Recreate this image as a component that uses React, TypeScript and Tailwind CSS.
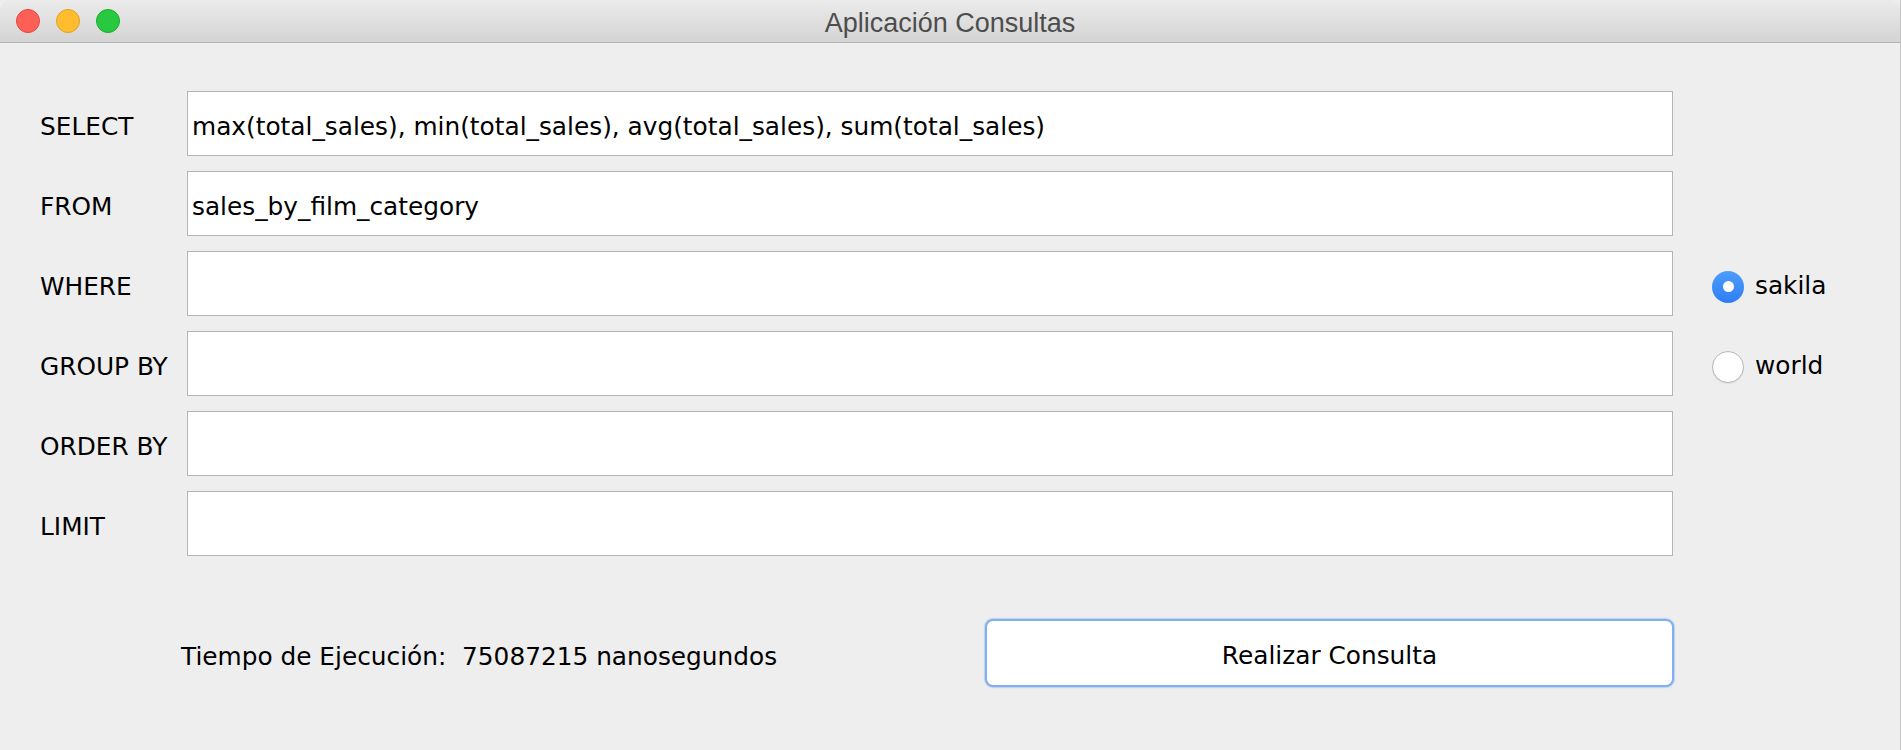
import React from "react";

const FIELDS = [
  { label: "SELECT", value: "max(total_sales), min(total_sales), avg(total_sales), sum(total_sales)" },
  { label: "FROM", value: "sales_by_film_category" },
  { label: "WHERE", value: "", radio: { name: "sakila", checked: true } },
  { label: "GROUP BY", value: "", radio: { name: "world", checked: false } },
  { label: "ORDER BY", value: "" },
  { label: "LIMIT", value: "" },
];

const Radio = ({ name, checked }: { name: string; checked: boolean }) => {
  return (
    <div className="flex items-center">
      {checked ? (
        <div className="w-[32px] h-[32px] rounded-full bg-gradient-to-b from-[#4d9dfb] to-[#2f7df6] flex items-center justify-center">
          <div className="w-[11px] h-[11px] rounded-full bg-white" />
        </div>
      ) : (
        <div className="w-[32px] h-[32px] rounded-full bg-white border border-[#b8b8b8] shadow-[0_1px_1px_rgba(0,0,0,0.08)]" />
      )}
      <span className="ml-[11px] text-[24.8px] leading-none text-black">{name}</span>
    </div>
  );
};

export default function App() {
  return (
    <div className="w-[1901px] h-[750px] bg-[#eeeeee] flex flex-col overflow-hidden border-r border-[#c4c4c4] font-['DejaVu_Sans',sans-serif]">
      {/* title bar */}
      <div className="h-[43px] shrink-0 rounded-t-[10px] bg-gradient-to-b from-[#ebebeb] to-[#d4d4d4] border-b border-[#b3b3b3] flex items-center relative">
        <div className="flex items-center gap-[16px] pl-[16px]">
          <div className="w-[24px] h-[24px] rounded-full bg-[#fe5f57] border border-[#e2463f]" />
          <div className="w-[24px] h-[24px] rounded-full bg-[#febc2e] border border-[#dfa123]" />
          <div className="w-[24px] h-[24px] rounded-full bg-[#28c840] border border-[#1dad2b]" />
        </div>
        <div className="absolute inset-0 flex items-center justify-center pt-[4px] font-['Liberation_Sans',sans-serif] text-[27px] text-[#4d4d4d]">
          Aplicación Consultas
        </div>
      </div>

      {/* form */}
      <div className="flex flex-col gap-[15px] pt-[48px] pl-[40px]">
        {FIELDS.map((f) => (
          <div key={f.label} className="flex items-center h-[65px]">
            <div className="w-[147px] pt-[7px] text-[24.8px] text-black">{f.label}</div>
            <div className="w-[1486px] h-[65px] bg-white border border-[#b4b4b4] flex items-center pl-[4px] pt-[7px] text-[24.8px] text-black whitespace-nowrap">
              {f.value}
            </div>
            {f.radio && (
              <div className="ml-[39px] pt-[6px]">
                <Radio name={f.radio.name} checked={f.radio.checked} />
              </div>
            )}
          </div>
        ))}
      </div>

      {/* bottom row */}
      <div className="flex items-center mt-[63px] pl-[181px]">
        <div className="w-[804px] pt-[7px] text-[24.8px] text-black whitespace-pre">
          Tiempo de Ejecución:  75087215 nanosegundos
        </div>
        <button className="w-[689px] h-[68px] bg-white border-2 border-[#80b0ee] shadow-[0_0_1px_1px_rgba(128,176,238,0.45)] rounded-[8px] flex items-center justify-center pt-[5px] text-[24.8px] text-black">
          Realizar Consulta
        </button>
      </div>
    </div>
  );
}
